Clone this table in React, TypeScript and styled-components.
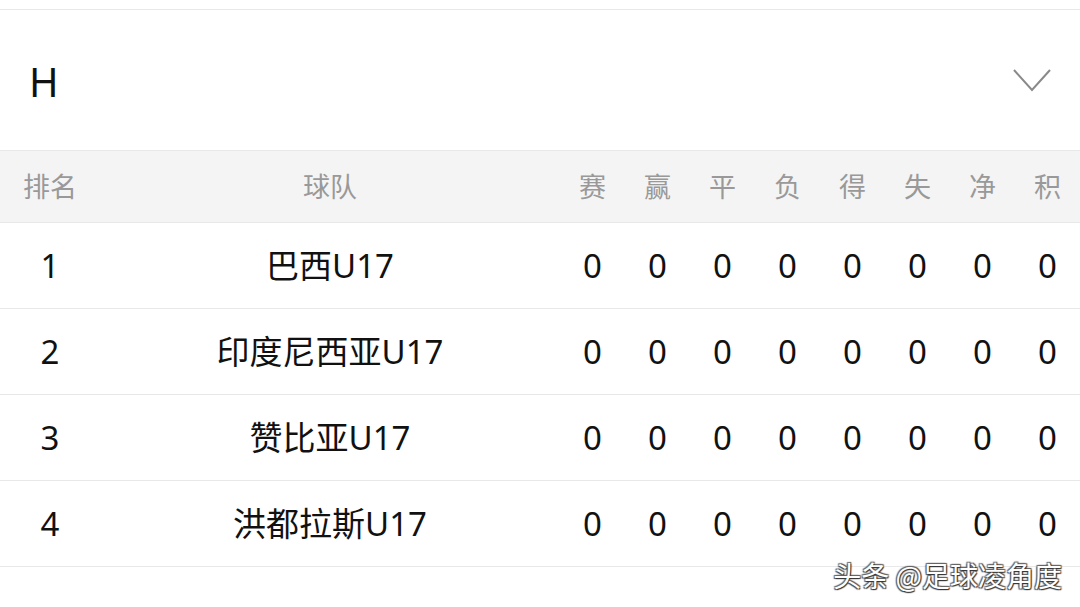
import React from "react";
import styled, { createGlobalStyle } from "styled-components";

const Global = createGlobalStyle`
  html, body { margin: 0; padding: 0; background: #fff; }
  body { font-family: "Noto Sans", "Noto Sans CJK SC", sans-serif; }
  * { box-sizing: border-box; }
`;

const Page = styled.div`
  position: relative;
  width: 1080px;
  height: 607px;
  overflow: hidden;
  background: #fff;
  padding-top: 9px;
`;

const Section = styled.div`
  border-top: 1px solid #e8e8e8;
`;

const GroupHeader = styled.div`
  height: 141px;
  display: flex;
  align-items: center;
  justify-content: space-between;
  padding: 0 28px 0 29px;
  border-bottom: 1px solid #e8e8e8;
`;

const GroupTitle = styled.span`
  font-family: "Noto Sans", sans-serif;
  font-size: 40px;
  color: #111;
  line-height: 1;
  margin-top: 4px;
`;

const Row = styled.div<{ $head?: boolean }>`
  display: grid;
  grid-template-columns: 100px 460px repeat(8, 1fr);
  align-items: center;
  height: ${(p) => (p.$head ? "72px" : "86px")};
  background: ${(p) => (p.$head ? "#f4f4f4" : "#fff")};
  border-bottom: 1px solid #e8e8e8;
  color: ${(p) => (p.$head ? "#999" : "#111")};
  font-size: ${(p) => (p.$head ? "27px" : "33px")};
`;

const Cell = styled.div`
  text-align: center;
  white-space: nowrap;
  line-height: 1;
`;

const Watermark = styled.div`
  position: absolute;
  right: 18px;
  bottom: 18px;
  font-family: "Noto Sans CJK SC", sans-serif;
  font-size: 28px;
  color: #fff;
  text-shadow: 1px 1px 1px #333, -1px -1px 1px #666, 1px -1px 1px #555, -1px 1px 1px #555;
  line-height: 1;
`;

const Chevron = () => (
  <svg width="40" height="24" viewBox="0 0 40 24" fill="none">
    <path d="M2 2 L20 22 L38 2" stroke="#8a8a8a" strokeWidth="2" />
  </svg>
);

const heads = ["赛", "赢", "平", "负", "得", "失", "净", "积"];
const teams = ["巴西U17", "印度尼西亚U17", "赞比亚U17", "洪都拉斯U17"];

export default function App() {
  return (
    <Page>
      <Global />
      <Section>
        <GroupHeader>
          <GroupTitle>H</GroupTitle>
          <Chevron />
        </GroupHeader>
        <Row $head>
          <Cell>排名</Cell>
          <Cell>球队</Cell>
          {heads.map((h) => (
            <Cell key={h}>{h}</Cell>
          ))}
        </Row>
        {teams.map((t, i) => (
          <Row key={t}>
            <Cell>{i + 1}</Cell>
            <Cell>{t}</Cell>
            {heads.map((h) => (
              <Cell key={h}>0</Cell>
            ))}
          </Row>
        ))}
      </Section>
      <Watermark>头条 @足球凌角度</Watermark>
    </Page>
  );
}
